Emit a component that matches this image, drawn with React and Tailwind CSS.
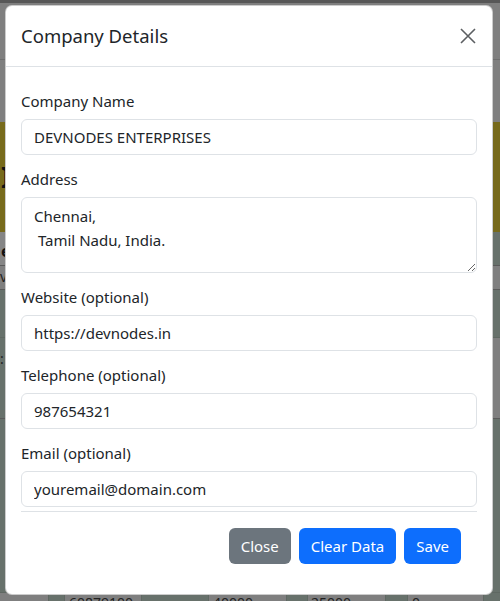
import { useState } from "react";

const font = { fontFamily: '"Noto Sans", "Open Sans", Arial, sans-serif' };

function Field({ label, value }) {
  return (
    <div className="mb-[12px]">
      <label className="block text-[15px] leading-[24px] text-[#212529] mb-[6px]">{label}</label>
      <input
        defaultValue={value}
        className="block w-full h-[36px] px-[12px] text-[15px] text-[#212529] bg-white border border-[#dee2e6] rounded-[6px] outline-none"
      />
    </div>
  );
}

export default function App() {
  const [open, setOpen] = useState(true);

  return (
    <div className="relative w-[500px] h-[601px] overflow-hidden bg-[#7f7f7f]" style={font}>
      {/* page behind the backdrop */}
      <div className="h-[3px] bg-[#575757]" />
      <div className="h-[57px] border-b border-[#6e6e6e]" />
      <div className="h-[62px]" />
      <div className="h-[110px] bg-[#776a1b] flex items-center overflow-hidden">
        <span className="text-[28px] font-bold text-[#111] pl-[1px]">I</span>
      </div>
      <div className="flex h-[34px] border-b border-[#5a5a5a]">
        <div className="w-[48px] bg-[#858585] flex items-end pb-[2px] pl-[1px] text-[#111] font-bold overflow-hidden">e</div>
        <div className="flex-1 bg-[#67716b]" />
      </div>
      <div className="flex h-[24px] border-b border-[#5a5a5a]">
        <div className="w-[48px] text-[#222] text-[14px] overflow-hidden">v</div>
        <div className="flex-1" />
      </div>
      <div className="flex h-[48px] bg-[#67716b] border-b border-[#5f6862]" />
      <div className="flex h-[81px] border-b border-[#5a5a5a]">
        <div className="w-[48px] bg-[#67716b] pt-[10px] text-[#222] text-[14px] overflow-hidden">:</div>
        <div className="flex-1" />
      </div>
      <div className="h-[174px] bg-[#67716b] border-b border-[#5f6862]" />
      <div className="flex h-[22px] text-[14px] leading-[20px] text-[#222]">
        <div className="w-[49px] border-r border-[#5f6862]" />
        <div className="w-[16px] bg-[#67716b] border-r border-[#5f6862]" />
        <div className="w-[77px] pl-[4px] border-r border-[#5f6862]">60879100</div>
        <div className="w-[67px] bg-[#67716b] border-r border-[#5f6862]" />
        <div className="w-[78px] pl-[4px] border-r border-[#5f6862]">40000</div>
        <div className="w-[21px] bg-[#67716b] border-r border-[#5f6862]" />
        <div className="w-[78px] pl-[3px] border-r border-[#5f6862]">25000</div>
        <div className="w-[22px] bg-[#67716b] border-r border-[#5f6862]" />
        <div className="w-[76px] pl-[4px] border-r border-[#5f6862]">0</div>
        <div className="flex-1 bg-[#67716b]" />
      </div>

      {/* modal */}
      {open && (
        <div className="absolute left-[5px] top-[5px] w-[488px] h-[590px] bg-white border border-black/20 rounded-[7px] flex flex-col">
          <div className="flex items-center justify-between h-[61px] px-[15px] border-b border-[#dee2e6]">
            <h5 className="text-[18.5px] leading-[30px] text-[#212529]">Company Details</h5>
            <button onClick={() => setOpen(false)} className="w-[16px] h-[16px] mr-[1px]">
              <svg viewBox="0 0 16 16" width="16" height="16" fill="none" stroke="#5c5f62" strokeWidth="1.6">
                <path d="M1 1 L15 15 M15 1 L1 15" />
              </svg>
            </button>
          </div>

          <div className="px-[15px] pt-[22px]">
            <Field label="Company Name" value="DEVNODES ENTERPRISES" />
            <div className="mb-[12px]">
              <label className="block text-[15px] leading-[24px] text-[#212529] mb-[6px]">Address</label>
              <textarea
                defaultValue={"Chennai,\n Tamil Nadu, India."}
                className="block w-full h-[76px] px-[12px] py-[6px] text-[15px] leading-[24px] text-[#212529] border border-[#dee2e6] rounded-[6px] outline-none resize-y"
              />
            </div>
            <Field label="Website (optional)" value="https://devnodes.in" />
            <Field label="Telephone (optional)" value="987654321" />
            <div className="mb-[4px]">
              <label className="block text-[15px] leading-[24px] text-[#212529] mb-[6px]">Email (optional)</label>
              <input
                defaultValue="youremail@domain.com"
                className="block w-full h-[36px] px-[12px] text-[15px] text-[#212529] border border-[#dee2e6] rounded-[6px] outline-none"
              />
            </div>
            <div className="border-t border-[#dee2e6] pt-[16px] flex justify-end gap-[8px] pr-[16px]">
              <button className="h-[36px] px-[12px] rounded-[6px] bg-[#6c757d] text-white text-[15px]">Close</button>
              <button className="h-[36px] px-[12px] rounded-[6px] bg-[#0d6efd] text-white text-[15px]">Clear Data</button>
              <button className="h-[36px] px-[12px] rounded-[6px] bg-[#0d6efd] text-white text-[15px]">Save</button>
            </div>
          </div>
        </div>
      )}
    </div>
  );
}
